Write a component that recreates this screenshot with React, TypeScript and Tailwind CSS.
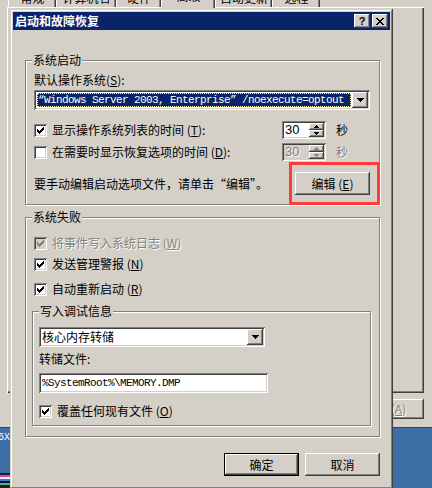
import React from "react";

// classic 3d borders
const raised = "shadow-[inset_-1px_-1px_#404040,inset_1px_1px_#ffffff,inset_-2px_-2px_#808080,inset_2px_2px_#d4d0c8]";
const sunken = "shadow-[inset_1px_1px_#808080,inset_-1px_-1px_#ffffff,inset_2px_2px_#404040,inset_-2px_-2px_#d4d0c8]";
const frame = "shadow-[inset_-1px_-1px_#404040,inset_1px_1px_#d4d0c8,inset_-2px_-2px_#808080,inset_2px_2px_#ffffff]";
const etched = "border border-[#808080] shadow-[1px_1px_0_#ffffff,inset_1px_1px_0_#ffffff]";
const grayText = "text-[#808080] [text-shadow:1px_1px_0_#ffffff]";
const mono = "font-['Liberation_Mono',monospace] text-[11px] tracking-[-0.6px]";

const CHECK = [
  [9, 3, 1], [8, 4, 2], [3, 5, 1], [7, 5, 3], [3, 6, 2],
  [6, 6, 3], [3, 7, 5], [4, 8, 3], [5, 9, 1],
];

function CheckBox({ checked = false, disabled = false }: { checked?: boolean; disabled?: boolean }) {
  return (
    <span className={`relative block w-[13px] h-[13px] shrink-0 ${disabled ? "bg-[#d4d0c8]" : "bg-white"} ${sunken}`}>
      {checked && (
        <svg className="absolute inset-0" width="13" height="13" viewBox="0 0 13 13" shapeRendering="crispEdges">
          {CHECK.map(([x, y, w]) => (
            <rect key={`${x}-${y}`} x={x} y={y} width={w} height={1} fill={disabled ? "#808080" : "#000000"} />
          ))}
        </svg>
      )}
    </span>
  );
}

function CheckRow({
  checked,
  disabled,
  className = "",
  children,
}: {
  checked?: boolean;
  disabled?: boolean;
  className?: string;
  children: React.ReactNode;
}) {
  return (
    <div className={`flex items-center gap-[5px] h-[14px] ${className}`}>
      <CheckBox checked={checked} disabled={disabled} />
      <span className={disabled ? grayText : ""}>{children}</span>
    </div>
  );
}

function DownArrow({ color = "#000000" }: { color?: string }) {
  return (
    <svg width="7" height="4" viewBox="0 0 7 4" shapeRendering="crispEdges" fill={color}>
      <path d="M0 0h7v1H0zM1 1h5v1H1zM2 2h3v1H2zM3 3h1v1H3z" />
    </svg>
  );
}

function SmallArrow({ up, color }: { up?: boolean; color: string }) {
  return (
    <svg width="5" height="3" viewBox="0 0 5 3" shapeRendering="crispEdges" fill={color}>
      {up ? <path d="M2 0h1v1H2zM1 1h3v1H1zM0 2h5v1H0z" /> : <path d="M0 0h5v1H0zM1 1h3v1H1zM2 2h1v1H2z" />}
    </svg>
  );
}

function Spinner({ disabled = false }: { disabled?: boolean }) {
  const c = disabled ? "#808080" : "#000000";
  return (
    <div className={`w-[44px] h-[18px] flex p-[2px] ${disabled ? "bg-[#d4d0c8]" : "bg-white"} ${sunken}`}>
      <span
        className={`flex-1 pl-[1px] text-[13px] leading-[14px] font-['Liberation_Sans',sans-serif] ${disabled ? grayText : "text-black"}`}
      >
        30
      </span>
      <div className="w-[15px] flex flex-col">
        <div className={`flex-1 bg-[#d4d0c8] ${raised} flex items-center justify-center`}>
          <SmallArrow up color={c} />
        </div>
        <div className={`flex-1 bg-[#d4d0c8] ${raised} flex items-center justify-center`}>
          <SmallArrow color={c} />
        </div>
      </div>
    </div>
  );
}

function Button({ children, isDefault = false, className = "" }: { children: React.ReactNode; isDefault?: boolean; className?: string }) {
  return (
    <div
      className={`w-[75px] h-[23px] bg-[#d4d0c8] flex items-center justify-center ${raised} ${isDefault ? "border border-black" : ""} ${className}`}
    >
      {children}
    </div>
  );
}

function CloseGlyph() {
  const rows: [number, number, number][] = [
    [0, 0, 2], [6, 0, 2], [1, 1, 2], [5, 1, 2], [2, 2, 4], [3, 3, 2],
    [2, 4, 4], [1, 5, 2], [5, 5, 2], [0, 6, 2], [6, 6, 2],
  ];
  return (
    <svg width="8" height="7" viewBox="0 0 8 7" shapeRendering="crispEdges">
      {rows.map(([x, y, w]) => (
        <rect key={`${x}-${y}`} x={x} y={y} width={w} height={1} fill="#000000" />
      ))}
    </svg>
  );
}

const tabs = [
  { name: "常规", w: "w-[48px]" },
  { name: "计算机名", w: "w-[60px]" },
  { name: "硬件", w: "w-[45px]" },
  { name: "高级", w: "w-[54px]", active: true },
  { name: "自动更新", w: "w-[57px]" },
  { name: "远程", w: "w-[48px]" },
];

export default function App() {
  return (
    <div className="relative w-[432px] h-[488px] overflow-hidden bg-[#3a6ea5] font-['Noto_Sans_CJK_SC','Noto_Sans',sans-serif] text-[12px] leading-[14px] text-black">
      {/* System properties window behind */}
      <div className="absolute left-0 top-[-13px] w-[440px] h-[441px] bg-[#d4d0c8] shadow-[inset_0_-1px_#404040] flex flex-col pl-[7px]">
        <div className="flex items-end h-[20px] pl-[1px]">
          {tabs.map((t) =>
            t.active ? (
              <div
                key={t.name}
                className={`${t.w} h-[21px] -mb-[1px] relative z-10 bg-[#d4d0c8] border-t border-l border-white shadow-[inset_-1px_0_#404040,inset_-2px_0_#808080] flex justify-center pt-[1px]`}
              >
                {t.name}
              </div>
            ) : (
              <div
                key={t.name}
                className={`${t.w} h-[18px] border-t border-l border-white shadow-[inset_-1px_0_#404040,inset_-2px_0_#808080] flex justify-center pt-[1px]`}
              >
                {t.name}
              </div>
            )
          )}
        </div>
        <div className="w-[417px] h-[386px] shadow-[inset_1px_1px_#ffffff,inset_-1px_-1px_#404040,inset_-2px_-2px_#808080]" />
        <div className="w-[417px] flex justify-end mt-[6px]">
          <div className={`w-[75px] h-[20px] ${raised} flex items-center justify-center ${grayText}`}>
            应用(<u>A</u>)
          </div>
        </div>
      </div>

      {/* desktop scraps at bottom left */}
      <div className="absolute left-0 top-[428px] w-[10px] h-[60px] overflow-hidden flex flex-col">
        <span className="mt-[5px] -ml-[2px] whitespace-nowrap text-white text-[10px] leading-[10px] font-['Liberation_Mono',monospace]">6X</span>
        <div className="mt-auto h-[2px] bg-[#202020]" />
        <div className="h-[2px] bg-[#e040c0]" />
        <div className="h-[2px] bg-[#f0f0f0]" />
        <div className="h-[2px] bg-[#3080e0]" />
        <div className="h-[2px] bg-[#101010]" />
        <div className="h-[2px] bg-[#40c080]" />
        <div className="h-[3px] bg-[#202020]" />
      </div>

      {/* Startup and recovery dialog */}
      <div className={`absolute left-[10px] top-[9px] w-[383px] h-[480px] bg-[#d4d0c8] p-[3px] flex flex-col ${frame}`}>
        <div className="h-[18px] bg-[#0a246a] flex items-center px-[2px]">
          <span className="flex-1 text-white font-bold text-[12px] leading-[14px]">启动和故障恢复</span>
          <div className={`w-[16px] h-[14px] bg-[#d4d0c8] ${raised} flex items-center justify-center font-['Liberation_Sans',sans-serif] font-bold text-[11px] leading-[11px]`}>
            ?
          </div>
          <div className={`ml-[2px] w-[16px] h-[14px] bg-[#d4d0c8] ${raised} flex items-center justify-center`}>
            <CloseGlyph />
          </div>
        </div>

        <div className="flex flex-col pl-[12px] pr-[10px]">
          <fieldset className={`mt-[24px] ${etched}`}>
            <legend className="ml-[6px] px-[1px] h-[12px] leading-[12px] bg-[#d4d0c8]">系统启动</legend>
            <div className="flex flex-col pl-[8px] pr-[9px] pt-[7px] pb-[9px]">
              <div className="h-[14px]">
                默认操作系统(<u>S</u>):
              </div>
              <div className={`mt-[3px] h-[20px] bg-white p-[2px] flex ${sunken}`}>
                <div className="flex-1 p-[1px]">
                  <div className={`h-full bg-[#0a246a] border border-dotted border-[#ffffc0] text-white flex items-center ${mono}`}>
                    “Windows Server 2003, Enterprise” /noexecute=optout
                  </div>
                </div>
                <div className={`w-[16px] bg-[#d4d0c8] ${raised} flex items-center justify-center`}>
                  <DownArrow />
                </div>
              </div>
              <div className="mt-[11px] h-[18px] flex items-center">
                <CheckRow checked>
                  显示操作系统列表的时间 (<u>T</u>):
                </CheckRow>
                <div className="ml-auto mr-[22px] flex items-center gap-[10px]">
                  <Spinner />
                  <span>秒</span>
                </div>
              </div>
              <div className="mt-[4px] h-[18px] flex items-center">
                <CheckRow>
                  在需要时显示恢复选项的时间 (<u>D</u>):
                </CheckRow>
                <div className="ml-auto mr-[22px] flex items-center gap-[10px]">
                  <Spinner disabled />
                  <span className={grayText}>秒</span>
                </div>
              </div>
              <div className="mt-[11px] flex items-center justify-between">
                <span>要手动编辑启动选项文件，请单击“编辑”。</span>
                <div className="relative">
                  <Button>
                    编辑 (<u>E</u>)
                  </Button>
                  <div className="absolute -left-[6px] -right-[10px] -top-[10px] -bottom-[10px] border-[3px] border-[#ff3b3b] z-10" />
                </div>
              </div>
            </div>
          </fieldset>

          <fieldset className={`mt-[6px] ${etched}`}>
            <legend className="ml-[6px] px-[1px] h-[12px] leading-[12px] bg-[#d4d0c8]">系统失败</legend>
            <div className="flex flex-col pl-[8px] pr-[8px] pt-[13px] pb-[10px]">
              <CheckRow checked disabled>
                将事件写入系统日志 (<u>W</u>)
              </CheckRow>
              <CheckRow checked className="mt-[7px]">
                发送管理警报 (<u>N</u>)
              </CheckRow>
              <CheckRow checked className="mt-[11px]">
                自动重新启动 (<u>R</u>)
              </CheckRow>

              <fieldset className={`mt-[9px] -ml-[2px] ${etched}`}>
                <legend className="ml-[6px] px-[1px] h-[12px] leading-[12px] bg-[#d4d0c8]">写入调试信息</legend>
                <div className="flex flex-col pl-[6px] pt-[10px] pb-[7px]">
                  <div className={`w-[226px] h-[20px] bg-white p-[2px] flex ${sunken}`}>
                    <div className="flex-1 flex items-center pl-[1px]">核心内存转储</div>
                    <div className={`w-[16px] bg-[#d4d0c8] ${raised} flex items-center justify-center`}>
                      <DownArrow />
                    </div>
                  </div>
                  <div className="mt-[5px] h-[14px]">转储文件:</div>
                  <div className={`mt-[7px] w-[229px] h-[20px] bg-white px-[3px] flex items-center ${sunken} ${mono}`}>
                    %SystemRoot%\MEMORY.DMP
                  </div>
                  <CheckRow checked className="mt-[11px]">
                    覆盖任何现有文件 (<u>O</u>)
                  </CheckRow>
                </div>
              </fieldset>
            </div>
          </fieldset>

          <div className="mt-[16px] flex justify-end gap-[6px]">
            <Button isDefault>确定</Button>
            <Button>取消</Button>
          </div>
        </div>
      </div>
    </div>
  );
}
